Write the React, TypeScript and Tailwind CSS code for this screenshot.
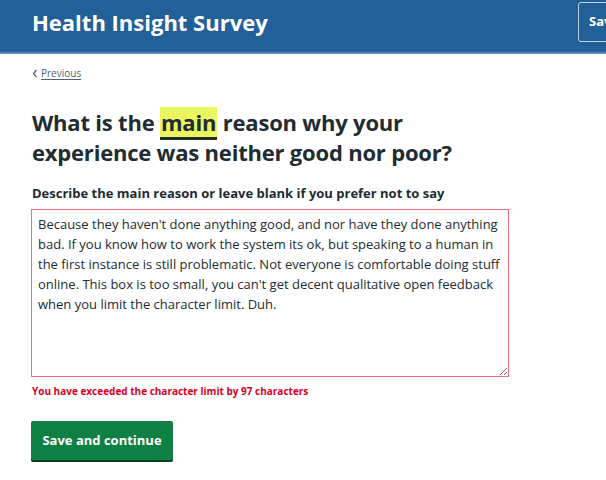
import React from 'react'

const answer =
  "Because they haven't done anything good, and nor have they done anything bad. If you know how to work the system its ok, but speaking to a human in the first instance is still problematic. Not everyone is comfortable doing stuff online. This box is too small, you can't get decent qualitative open feedback when you limit the character limit. Duh."

export default function App() {
  return (
    <div className="min-h-[480px] bg-white font-['Open_Sans',sans-serif] text-[#212b32]">
      {/* Header */}
      <header className="flex h-[54px] items-start justify-between overflow-hidden border-b-2 border-[#5a8bbd] bg-[#22609a] pl-8">
        <h2 className="pt-[6px] text-[22px] font-bold leading-[32px] text-white">
          Health Insight Survey
        </h2>
        <button className="-mr-[60px] mt-[2px] h-[40px] w-[88px] shrink-0 rounded-[3px] border border-white/70 pl-[10px] text-left text-[13px] font-bold text-white">
          Save
        </button>
      </header>

      <main className="px-8">
        {/* Back link */}
        <a
          href="#"
          className="mt-[12px] inline-flex items-center gap-[3px] text-[10px] leading-[14px] text-[#4c6272]"
        >
          <svg width="6" height="9" viewBox="0 0 6 9" className="mt-[1px]">
            <path d="M4.5 1 L1.5 4.5 L4.5 8" fill="none" stroke="#4c6272" strokeWidth="1.2" />
          </svg>
          <span className="underline decoration-[#4c6272] underline-offset-2">Previous</span>
        </a>

        {/* Question */}
        <h1 className="mt-[23px] text-[22px] font-bold leading-[30px] tracking-[-0.2px] text-[#212b32]">
          What is the{' '}
          <span className="border-b-[3px] border-[#212b32] bg-[#ebf65f] px-[1px]">main</span>{' '}
          reason why your
          <br />
          experience was neither good nor poor?
        </h1>

        <label className="mt-[16px] block text-[13px] font-bold leading-[20px]">
          Describe the main reason or leave blank if you prefer not to say
        </label>

        <textarea
          defaultValue={answer}
          className="mt-[6px] block h-[168px] w-[478px] -ml-[1px] border border-[#e8707e] px-[6px] pt-[4px] text-[13px] leading-[20px] text-[#212b32] outline-none"
        />

        <p className="mt-[6px] text-[10px] font-bold leading-[16px] text-[#d5001c]">
          You have exceeded the character limit by 97 characters
        </p>

        <button className="mt-[22px] -ml-[1px] h-[39px] w-[142px] rounded-[2px] bg-[#0f8043] text-[13px] font-bold text-white shadow-[0_2px_0_#00401e]">
          Save and continue
        </button>
      </main>
    </div>
  )
}
